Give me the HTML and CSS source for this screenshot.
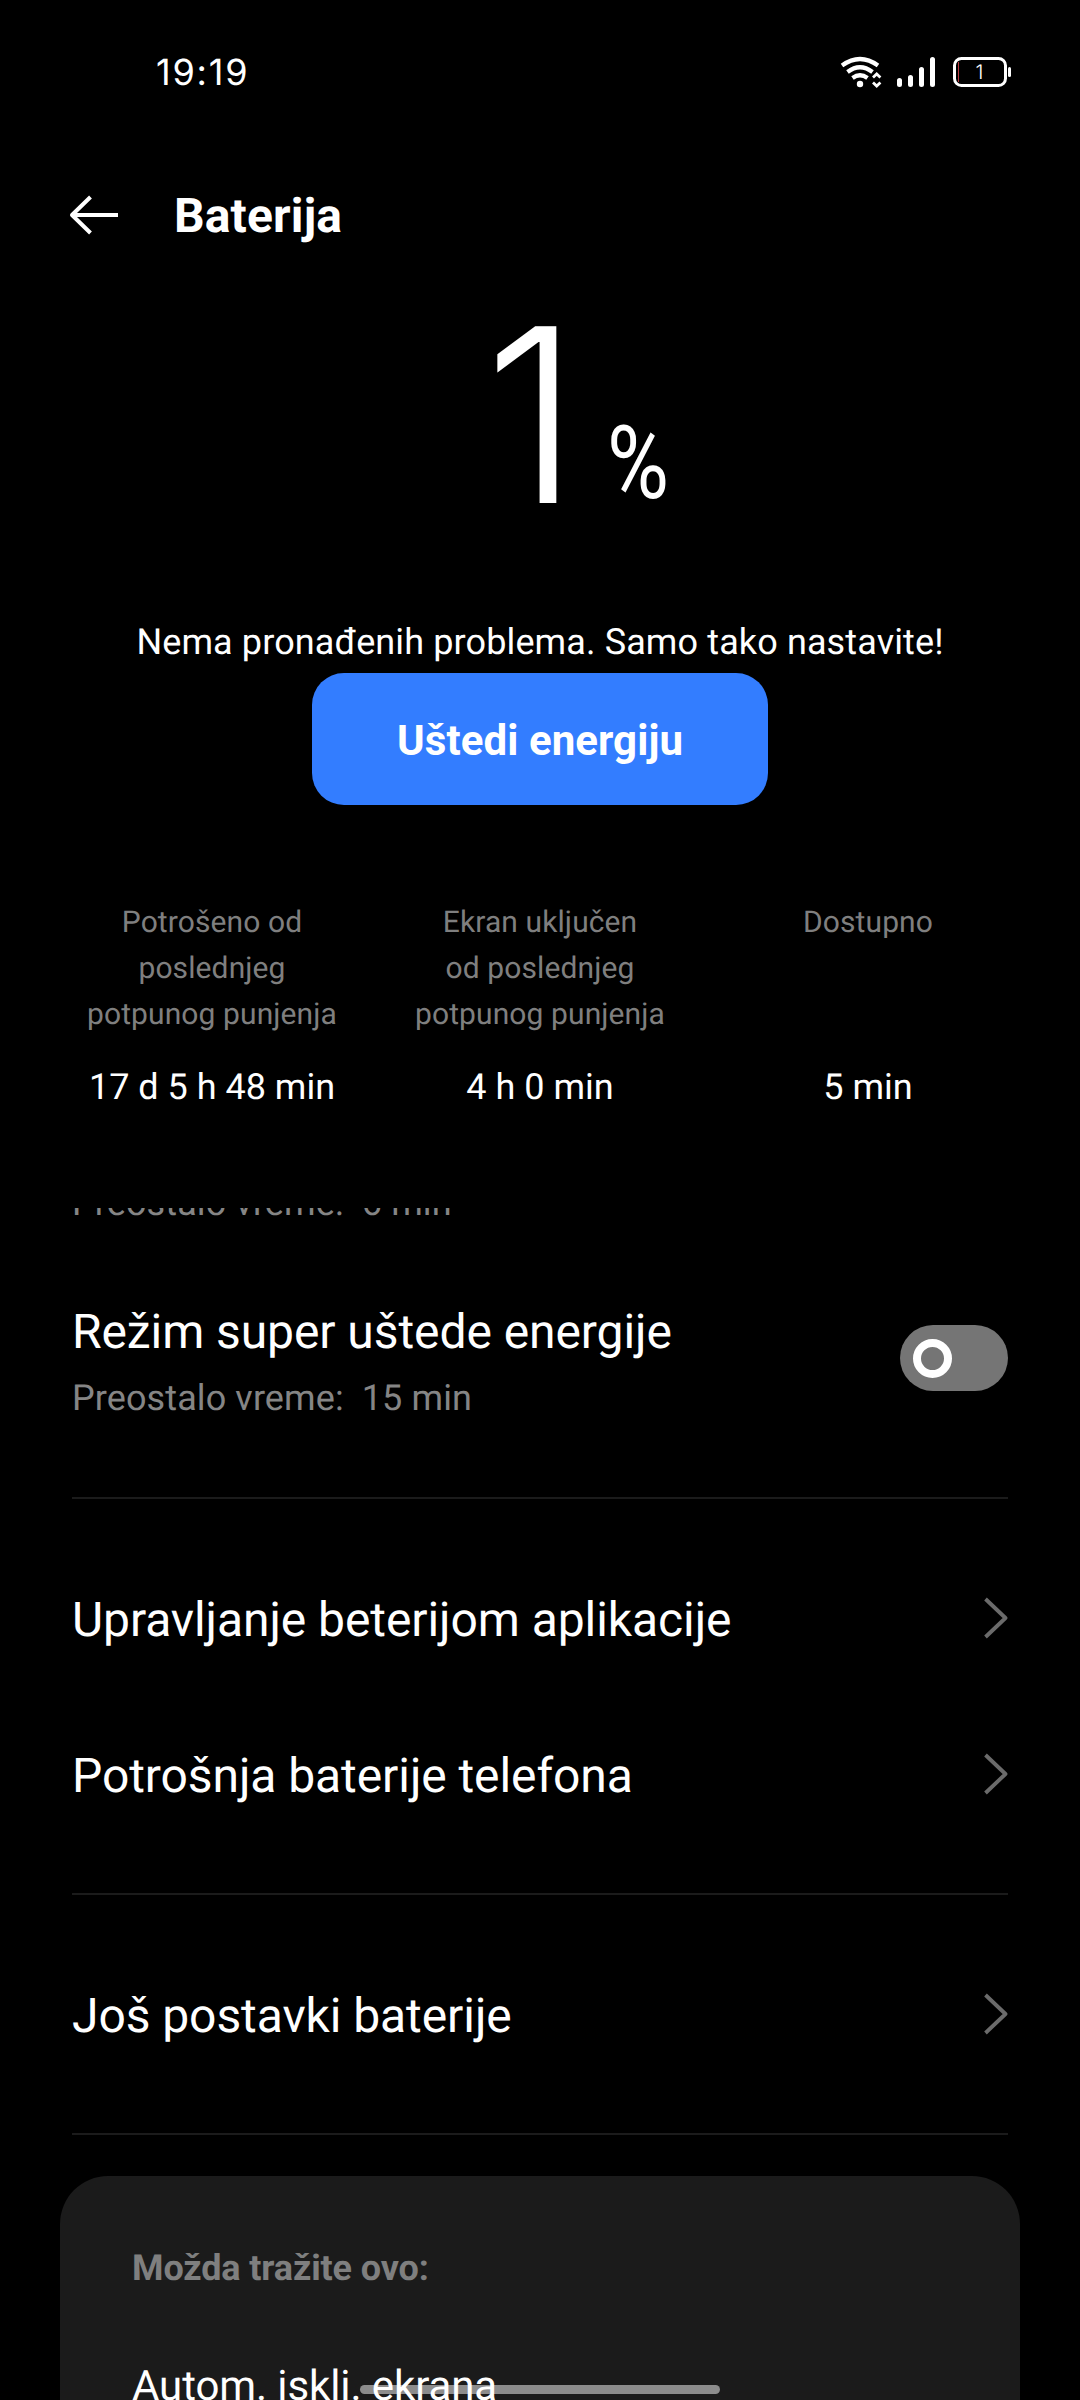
FILE: index.html
```html
<!DOCTYPE html>
<html lang="sr"><head><meta charset="utf-8"><title>Baterija</title><link rel="stylesheet" href="styles.css"></head>
<body>
<main class="screen">
<header class="status"><span class="clock">19:19</span>
<svg class="status-icons" viewBox="839 52 174 40" width="174" height="40" fill="none">
<path d="M842 65.500Q860 52.500 878 65.500M847.500 72Q860 62.500 872.500 72M852.500 78Q860 72.500 867.500 78" stroke="#fff" stroke-width="4.200"/>
<circle cx="860" cy="84" r="3.200" fill="#fff"/><path d="M873 77.500l3.700-3.500 3.700 3.500M873 82.500l3.700 3.500 3.700-3.500" stroke="#fff" stroke-width="2.800"/>
<path d="M899.500 80.500v4M910.500 77.500v7M921.500 69.500v15M932.500 59.500v25" stroke="#fff" stroke-width="5" stroke-linecap="round"/>
<path d="M958.500 62v20" stroke="#b63a40"/>
<rect x="954.500" y="58.500" width="51" height="27" rx="7" stroke="#fff" stroke-width="3"/><path d="M1009.500 68.500v7" stroke="#fff" stroke-width="3" stroke-linecap="round"/>
<text x="979.500" y="79" class="battery-number">1</text></svg></header>
<nav class="toolbar"><svg class="back" width="50" height="42" viewBox="0 0 50 42"><path d="M21.500 3L3 21l18.500 18M3 21h46"/></svg><h1>Baterija</h1></nav>
<section class="level"><span class="number">1</span><span class="percent">%</span></section>
<p class="message">Nema pronađenih problema. Samo tako nastavite!</p>
<button class="save">Uštedi energiju</button>
<section class="stats">
<div><p>Potrošeno od<br>poslednjeg<br>potpunog punjenja</p><strong>17 d 5 h 48 min</strong></div>
<div><p>Ekran uključen<br>od poslednjeg<br>potpunog punjenja</p><strong>4 h 0 min</strong></div>
<div><p>Dostupno</p><strong>5 min</strong></div></section>
<section class="list">
<div class="clipped"><p>Preostalo vreme:&nbsp; 6 min</p></div>
<div class="super"><div><h2>Režim super uštede energije</h2><p>Preostalo vreme:&nbsp; 15 min</p></div><span class="toggle"></span></div>
<div class="row"><h2>Upravljanje beterijom aplikacije</h2><svg class="chevron" viewBox="0 0 24 42"><path d="M1.500 2l20 19-20 19"/></svg></div>
<div class="row usage"><h2>Potrošnja baterije telefona</h2><svg class="chevron" viewBox="0 0 24 42"><path d="M1.500 2l20 19-20 19"/></svg></div>
<div class="row more"><h2>Još postavki baterije</h2><svg class="chevron" viewBox="0 0 24 42"><path d="M1.500 2l20 19-20 19"/></svg></div>
</section>
<section class="suggestions"><h3>Možda tražite ovo:</h3><p>Autom. isklj. ekrana</p></section>
<div class="home"></div>
</main></body></html>
```
FILE: styles.css
```css
*{box-sizing:border-box}
body{margin:0;background:#000;color:#fff;font-family:Roboto,sans-serif;text-rendering:geometricPrecision}
p,h1,h2,h3{margin:0;white-space:nowrap}
.screen{position:relative;width:1080px;height:2400px;overflow:hidden}
.status{height:144px;display:flex;justify-content:space-between;padding:52px 67px 0 156px}
.clock{font-family:Inter,sans-serif;font-size:36px;line-height:40px;letter-spacing:1.8px}
.battery-number{font:300 20px Inter,sans-serif;fill:#fff;text-anchor:middle}
.toolbar{height:144px;display:flex;align-items:center;padding-left:69px;gap:55px}
.back{margin-top:-2px;fill:none;stroke:#fff;stroke-width:4;stroke-linejoin:round}
h1{font-size:48px;line-height:56px;font-weight:700;letter-spacing:.15px}
.level{height:321px;padding:0 0 0 484px;display:flex;align-items:flex-start}
.number{font-family:Inter,sans-serif;font-weight:320;font-size:243px;line-height:255px;width:123px}
.percent{font-size:102px;line-height:98px;margin-top:126px;transform:scaleX(.83);transform-origin:left}
.message{height:64px;text-align:center;font-size:36px;line-height:67px;letter-spacing:.12px}
.save{display:block;width:456px;height:132px;margin:0 auto;border:0;border-radius:32px;background:#337dff;color:#fff;font:700 42px/134px Roboto,sans-serif;letter-spacing:.08px;padding:1px 0 0}
.stats{display:grid;grid-template-columns:repeat(3,328px);padding:95px 48px 0;height:403px;text-align:center}
.stats p{height:146px;font-size:30px;line-height:46px;letter-spacing:.1px;color:#7f7f7f}
.stats strong{display:block;font-weight:400;font-size:36px;line-height:42px;margin-top:20px}
.list{padding:0 72px}
.clipped{height:12px;overflow:hidden;font-size:36px;line-height:42px;letter-spacing:.1px;color:#858585}
.clipped p{margin-top:-26px}
.super{display:flex;justify-content:space-between;height:279px;padding-top:75px;border-bottom:2px solid #1b1b1b}
h2{font-size:48px;line-height:74px;font-weight:400;letter-spacing:-.08px}
.super p{font-size:36px;line-height:58px;letter-spacing:.1px;color:#858585}
.toggle{width:108px;height:66px;margin-top:30px;border-radius:33px;background:#757575;display:flex;align-items:center;padding-left:13px}
.toggle::before{content:"";box-sizing:border-box;width:39px;height:39px;border:8px solid #fff;border-radius:50%}
.row{height:199px;padding-top:84px;display:flex;justify-content:space-between;align-items:flex-start}
.usage{height:197px;padding-top:41px;border-bottom:2px solid #1b1b1b}
.more{height:240px;border-bottom:2px solid #1b1b1b}
.chevron{width:24px;height:42px;margin-top:14px;fill:none;stroke:#6b6b6b;stroke-width:3.800;stroke-linejoin:round}
.suggestions{height:300px;margin:41px 60px 0;padding:64px 72px;border-radius:48px;background:#1b1b1b}
h3{font-size:36px;line-height:56px;letter-spacing:-.13px;color:#7f7f7f}
.suggestions p{position:relative;z-index:1;font-size:42px;line-height:60px;margin-top:61px;letter-spacing:-.08px}
.home{position:absolute;left:360px;top:2385px;width:360px;height:9px;border-radius:5px;background:#8c8c8c}
```
